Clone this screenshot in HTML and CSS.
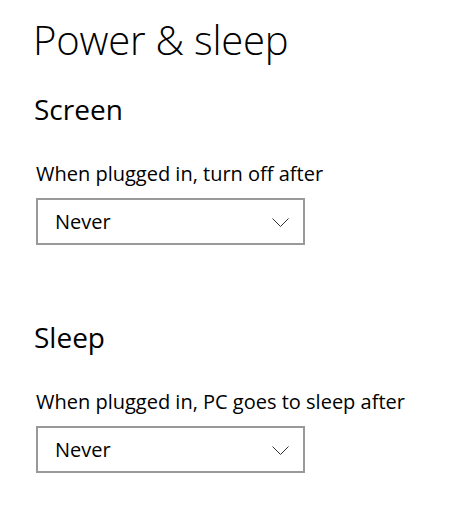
FILE: index.html
```html
<!DOCTYPE html>
<html lang="en">
<head>
  <meta charset="UTF-8">
  <meta name="viewport" content="width=device-width, initial-scale=1.0">
  <title>Power &amp; sleep</title>
  <link rel="stylesheet" href="styles.css">
</head>
<body>
  <div class="page">
    <h1 class="page-title">Power &amp; sleep</h1>

    <!-- Screen -->
    <div class="section">
      <h2 class="section-title">Screen</h2>
      <div class="field-label">When plugged in, turn off after</div>
      <div class="dropdown" role="combobox">
        <span class="dropdown-value">Never</span>
        <svg class="chevron" width="17" height="9" viewBox="0 0 17 9">
          <polyline points="0.5,0.5 8.5,8.5 16.5,0.5" fill="none" stroke="#333" stroke-width="1"/>
        </svg>
      </div>
    </div>

    <!-- Sleep -->
    <div class="section section-sleep">
      <h2 class="section-title">Sleep</h2>
      <div class="field-label">When plugged in, PC goes to sleep after</div>
      <div class="dropdown" role="combobox">
        <span class="dropdown-value">Never</span>
        <svg class="chevron" width="17" height="9" viewBox="0 0 17 9">
          <polyline points="0.5,0.5 8.5,8.5 16.5,0.5" fill="none" stroke="#333" stroke-width="1"/>
        </svg>
      </div>
    </div>
  </div>
</body>
</html>
```

FILE: styles.css
```css
body {
  margin: 0;
  background-color: #fff;
  color: #000;
  font-family: "Open Sans", "Noto Sans", sans-serif;
}
.page {
  padding: 15px 0 0 36px;
}
.page-title {
  margin: 0 0 0 -3px;
  font-size: 40px;
  line-height: 50px;
  font-weight: 300;
  letter-spacing: -0.2px;
}
.section-title {
  margin: 27px 0 0 -2px;
  font-size: 28px;
  line-height: 34px;
  font-weight: 400;
}
.section-sleep .section-title {
  margin-top: 75px;
}
.field-label {
  margin-top: 34px;
  font-size: 20px;
  line-height: 28px;
}
.dropdown {
  display: flex;
  align-items: center;
  justify-content: space-between;
  box-sizing: border-box;
  width: 269px;
  height: 47px;
  margin-top: 10px;
  padding: 0 14px 0 17px;
  border: 2px solid #999;
  font-size: 20px;
  line-height: 28px;
}
.chevron {
  display: block;
  margin-top: 1px;
}
```
